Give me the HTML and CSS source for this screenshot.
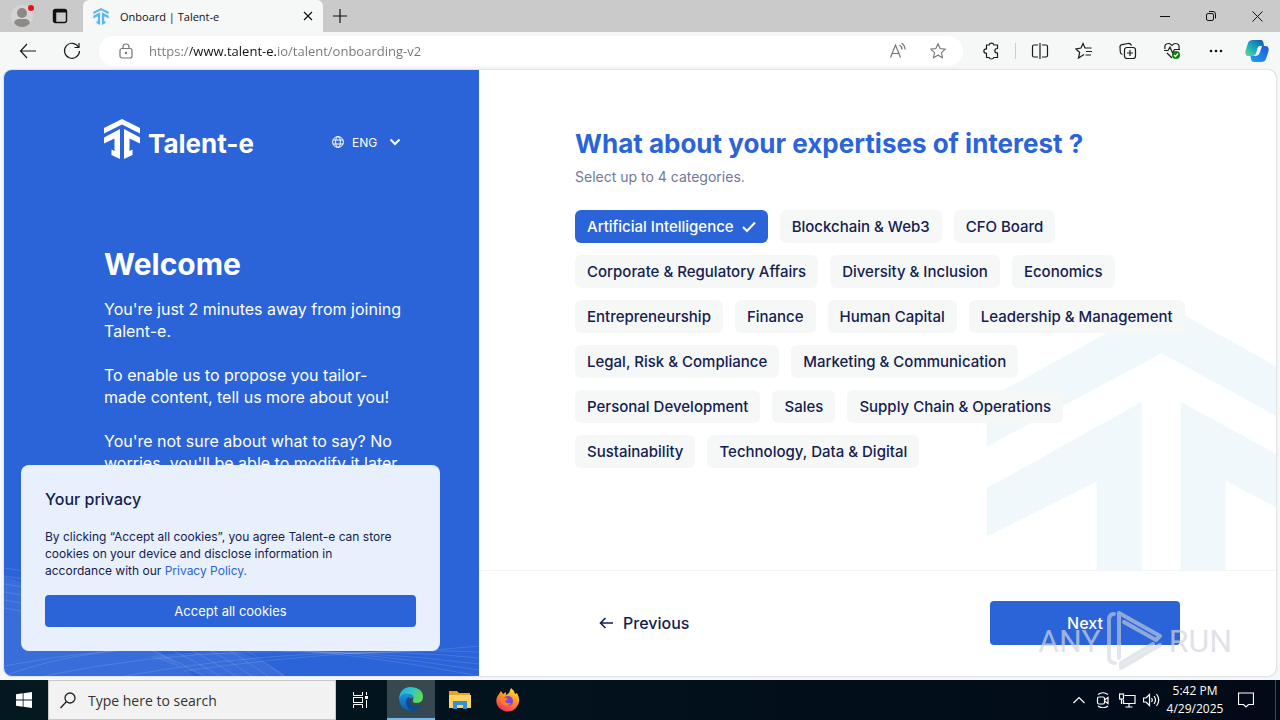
FILE: index.html
```html
<!DOCTYPE html>
<html lang="en">

<head>
    <meta charset="UTF-8">
    <meta name="viewport" content="width=device-width, initial-scale=1.0">
    <title>Onboard | Talent-e</title>
    <link rel="stylesheet" href="styles.css">
</head>

<body>
    <!-- shared shapes -->
    <svg class="defs" width="0" height="0" aria-hidden="true">
        <symbol id="mark" viewBox="0 0 36 40">
            <path d="M0 9L18 0L36 9V14.500L18 5.500L0 14.500Z" />
            <path d="M0 18.500L16 10V40L7.500 36V30.500L10.500 32V19.500L0 24.500Z" />
            <path d="M36 18.500L20 10V40L28.500 36V30.500L25.500 32V19.500L36 24.500Z" />
        </symbol>
        <symbol id="star" viewBox="0 0 20 20">
            <path d="M10 2L12.4 7.2L18 7.9L13.9 11.8L15 17.5L10 14.7L5 17.5L6.1 11.8L2 7.9L7.6 7.2Z" />
        </symbol>
    </svg>

    <header class="titlebar">
        <button class="title-btn" aria-label="Profile">
            <svg width="24" height="24" viewBox="0 0 24 24">
                <circle cx="12" cy="12" r="11" fill="#d6d4d3" />
                <circle cx="12" cy="9" r="5" fill="#8c8a89" />
                <path d="M4 19Q5 15 9 15H15Q19 15 20 19Q17 23 12 23Q7 23 4 19Z" fill="#8c8a89" />
                <circle cx="21" cy="4" r="3" fill="#e3121b" />
            </svg>
        </button>
        <button class="title-btn" aria-label="Tab actions">
            <svg width="16" height="16" viewBox="0 0 16 16" fill="none" stroke="#111" stroke-width="1.4">
                <rect x="1.5" y="1.5" width="13" height="13" rx="2" />
                <path d="M2 3H14" stroke-width="3" />
                <path d="M3 4V14" stroke-width="2.500" />
            </svg>
        </button>
        <div class="tab">
            <svg class="tab-logo" width="16" height="17"><use href="#mark" /></svg>
            <span class="tab-title">Onboard | Talent-e</span>
            <button class="tab-close" aria-label="Close tab">
                <svg width="10" height="10" viewBox="0 0 10 10" stroke="#111" stroke-width="1.2"><path d="M1 1L9 9M9 1L1 9" /></svg>
            </button>
        </div>
        <button class="new-tab" aria-label="New tab">
            <svg width="14" height="14" viewBox="0 0 14 14" stroke="#111" stroke-width="1.2"><path d="M7 0V14M0 7H14" /></svg>
        </button>
        <div class="window-controls">
            <button aria-label="Minimize"><svg width="10" height="10" viewBox="0 0 10 10" stroke="#111"><path d="M0 5.5H10" /></svg></button>
            <button aria-label="Restore">
                <svg width="12" height="12" viewBox="0 0 12 12" fill="none" stroke="#111"><rect x="1.5" y="3.5" width="7" height="7" rx="1.5" /><path d="M4 1.5H8Q10.500 1.500 10.500 4V8.500" /></svg>
            </button>
            <button aria-label="Close"><svg width="11" height="11" viewBox="0 0 11 11" stroke="#111"><path d="M.5 .5L10.500 10.500M10.500 .5L.5 10.500" /></svg></button>
        </div>
    </header>

    <nav class="toolbar">
        <button class="tool-btn" aria-label="Back">
            <svg width="18" height="18" viewBox="0 0 18 18" class="line"><path d="M17 9H1.500M8 2L1.500 9L8 16" /></svg>
        </button>
        <button class="tool-btn" aria-label="Refresh">
            <svg width="18" height="18" viewBox="0 0 18 18" class="line"><path d="M15.500 5A7.500 7.500 0 1 0 16.500 9M16 1V5.500H11.500" /></svg>
        </button>
        <div class="address">
            <svg width="14" height="16" viewBox="0 0 14 16" class="line muted"><rect x="1" y="5.500" width="12" height="9.500" rx="2" /><path d="M4 5.500V4Q4 1 7 1Q10 1 10 4V5.500" /><circle cx="7" cy="10" r=".6" /></svg>
            <input type="text" aria-label="Address" value="https://www.talent-e.io/talent/onboarding-v2">
            <button aria-label="Read aloud">
                <svg width="18" height="18" viewBox="0 0 18 18" class="line muted"><path d="M1.500 15.500L6.500 3L11.500 15.500M3.200 11.500H9.800M10.500 3Q13 4.500 13 7.500M12.500 1Q16 3.500 16 7.500" /></svg>
            </button>
            <button aria-label="Add to favorites"><svg width="18" height="18" class="line muted"><use href="#star" /></svg></button>
        </div>
        <button class="tool-btn" aria-label="Extensions">
            <svg width="18" height="18" viewBox="0 0 18 18" class="line"><path d="M5 3H7.200Q7.500 1.200 9.500 1.200Q11.500 1.200 11.800 3H15.500V6.500Q12.800 6.500 12.800 8.700Q12.800 11 15.500 11V15.500H11.800Q11.500 17 9.500 17Q7.500 17 7.200 15.500H4.500V11.300Q1.800 11.300 1.800 9Q1.800 6.800 4.500 6.800V3Z" /></svg>
        </button>
        <span class="divider"></span>
        <button class="tool-btn" aria-label="Split screen">
            <svg width="18" height="16" viewBox="0 0 18 16" class="line"><path d="M7 2H3Q1.500 2 1.500 3.500V12.500Q1.500 14 3 14H7M11 2H15Q16.500 2 16.500 3.500V12.500Q16.500 14 15 14H11M9 0V16" /></svg>
        </button>
        <button class="tool-btn" aria-label="Favorites">
            <svg width="18" height="18" viewBox="0 0 18 18" class="line"><path d="M9 12.500L3.500 16L4.700 10.500L1 7L6 6L8 1.500L10 6H16.500M11 9.500H17M10.500 13H16" /></svg>
        </button>
        <button class="tool-btn" aria-label="Collections">
            <svg width="18" height="18" viewBox="0 0 18 18" class="line"><rect x="5.500" y="5.500" width="11" height="11" rx="2.500" /><path d="M11 8V14M8 11H14M3.500 12.500Q1.500 12 1.300 10L1 5Q.9 3 3 2.600L9 1.500Q11.500 1.200 12.500 3.500" /></svg>
        </button>
        <button class="tool-btn" aria-label="Browser essentials">
            <svg width="18" height="18" viewBox="0 0 18 18" class="line"><path d="M2 7Q1 1.500 5.500 1.500Q7.500 1.500 9 3.500Q10.500 1.500 12.500 1.500Q17 1.500 16 7M1 8.500H5L7 5L9.500 11L11.500 7.500H17M4 11L9 16" /><circle cx="13" cy="13" r="4" fill="#107c10" stroke="none" /><path d="M11 13L12.500 14.500L15 11.500" stroke="#fff" /></svg>
        </button>
        <button class="tool-btn" aria-label="Settings and more">
            <svg width="16" height="4" viewBox="0 0 16 4" fill="#111"><circle cx="3" cy="2" r="1.300" /><circle cx="8" cy="2" r="1.300" /><circle cx="13" cy="2" r="1.300" /></svg>
        </button>
        <button class="copilot" aria-label="Copilot">
            <svg width="24" height="24" viewBox="0 0 24 24">
                <defs>
                    <linearGradient id="cpA" x1="0" y1="1" x2="1" y2="0"><stop offset="0" stop-color="#5fe08c" /><stop offset=".4" stop-color="#22b0b8" /><stop offset="1" stop-color="#0b55b8" /></linearGradient>
                    <linearGradient id="cpB" x1="0" y1="1" x2="1" y2="0"><stop offset="0" stop-color="#1ca6f2" /><stop offset="1" stop-color="#1e55dc" /></linearGradient>
                </defs>
                <path d="M8 1H16Q18 1 18.500 4L19 7H16Q13 7 12 11L10.500 17H4Q-.5 17 .5 12L3 4Q4 1 8 1Z" fill="url(#cpA)" />
                <path d="M16 23H9Q6.500 23 6 20L5.500 17H9Q11 17 12 14L14 7H20Q24.500 7 23.500 12L21 20Q20 23 16 23Z" fill="url(#cpB)" />
                <path d="M14 7H17L15 13Q14 17 10 17H8Q11 16 12 12Q12.500 8 14 7Z" fill="#f4f8ff" />
            </svg>
        </button>
    </nav>

    <div class="page">
        <aside class="side">
            <svg class="waves" viewBox="0 0 475 180" preserveAspectRatio="none" aria-hidden="true">
                <path class="band" d="M0 80Q110 120 190 180H0Z" />
                <path class="band" d="M225 154Q260 162 282 180L200 180L145 160Z" />
                <path d="M0 72Q160 90 280 180M0 80Q150 98 264 180M0 88Q140 106 248 180M0 96Q130 114 232 180M0 104Q120 122 216 180M0 112Q110 130 200 180" />
                <path d="M0 180Q160 120 475 180M0 170Q200 130 475 174M40 180Q240 138 475 168M120 180Q320 145 475 162M180 175Q360 150 475 156M220 150Q340 164 475 150" />
            </svg>
            <div class="side-top">
                <a class="brand" href="#">
                    <svg width="36" height="40" aria-hidden="true"><use href="#mark" /></svg>
                    <span>Talent-e</span>
                </a>
                <div class="lang">
                    <svg width="12" height="12" viewBox="0 0 12 12" fill="none" stroke="#fff"><circle cx="6" cy="6" r="5.400" /><ellipse cx="6" cy="6" rx="2.400" ry="5.400" /><path d="M.8 4H11.200M.8 8H11.200" /></svg>
                    <select aria-label="Language">
                        <option>ENG</option>
                        <option>FRA</option>
                    </select>
                    <svg class="lang-arrow" width="12" height="8" viewBox="0 0 12 8" fill="none" stroke="#fff" stroke-width="2"><path d="M1.500 1.500L6 6L10.500 1.500" /></svg>
                </div>
            </div>
            <h1>Welcome</h1>
            <p>You're just 2 minutes away from joining Talent-e.</p>
            <p>To enable us to propose you tailor-made content, tell us more about you!</p>
            <p>You're not sure about what to say? No worries, you'll be able to modify it later.</p>
        </aside>

        <main class="main">
            <section class="question">
                <svg class="backdrop" viewBox="78 0 870 840" aria-hidden="true">
                    <path d="M80 328L605 38L948 228V378L605 190L80 470Z" />
                    <path d="M80 595L545 335V840H410V575L80 740Z" />
                    <path d="M662 335L948 491V652L797 572V840H662Z" />
                </svg>
                <h2>What about your expertises of interest ?</h2>
                <p class="hint">Select up to 4 categories.</p>
                <div class="chips">
                    <div class="chip-row">
                        <button class="chip selected" aria-pressed="true">Artificial Intelligence
                            <svg width="14" height="12" viewBox="0 0 14 12" fill="none" stroke="#fff" stroke-width="2"><path d="M1 6L5 10L13 1.500" /></svg>
                        </button>
                        <button class="chip">Blockchain &amp; Web3</button>
                        <button class="chip">CFO Board</button>
                    </div>
                    <div class="chip-row">
                        <button class="chip">Corporate &amp; Regulatory Affairs</button>
                        <button class="chip">Diversity &amp; Inclusion</button>
                        <button class="chip">Economics</button>
                    </div>
                    <div class="chip-row">
                        <button class="chip">Entrepreneurship</button>
                        <button class="chip">Finance</button>
                        <button class="chip">Human Capital</button>
                        <button class="chip">Leadership &amp; Management</button>
                    </div>
                    <div class="chip-row">
                        <button class="chip">Legal, Risk &amp; Compliance</button>
                        <button class="chip">Marketing &amp; Communication</button>
                    </div>
                    <div class="chip-row">
                        <button class="chip">Personal Development</button>
                        <button class="chip">Sales</button>
                        <button class="chip">Supply Chain &amp; Operations</button>
                    </div>
                    <div class="chip-row">
                        <button class="chip">Sustainability</button>
                        <button class="chip">Technology, Data &amp; Digital</button>
                    </div>
                </div>
            </section>
            <footer class="actions">
                <button class="previous">
                    <svg width="14" height="12" viewBox="0 0 14 12" fill="none" stroke="#14204f" stroke-width="1.600"><path d="M14 6H1.500M6.500 1L1.500 6L6.500 11" /></svg>
                    Previous
                </button>
                <button class="next">Next</button>
            </footer>
        </main>

        <div class="cookies" role="dialog" aria-label="Your privacy">
            <h3>Your privacy</h3>
            <p>By clicking “Accept all cookies”, you agree Talent-e can store cookies on your device and disclose information in accordance with our <a href="#">Privacy Policy.</a></p>
            <button>Accept all cookies</button>
        </div>

        <div class="watermark">
            <span>ANY</span>
            <svg width="56" height="62" viewBox="0 0 56 62" fill="none" stroke-width="4" stroke-linejoin="round" stroke-linecap="round"><path d="M7 4Q2 4 2 10V47Q2 53 8 53M12 3V48M12 3L53 26L49 30L17 12M53 35L14 58V53L46 34M12 3V24" /></svg>
            <span>RUN</span>
        </div>
    </div>

    <footer class="taskbar">
        <button class="task" aria-label="Start">
            <svg width="16" height="16" viewBox="0 0 16 16" fill="#fff"><path d="M0 2.200L6.700 1.300V7.600H0ZM7.500 1.200L16 0V7.600H7.500ZM0 8.400H6.700V14.700L0 13.800ZM7.500 8.400H16V16L7.500 14.800Z" /></svg>
        </button>
        <label class="search">
            <svg width="16" height="17" viewBox="0 0 16 17" fill="none" stroke="#222" stroke-width="1.300"><circle cx="10" cy="6" r="5" /><path d="M6.500 9.500L.5 16" /></svg>
            <input type="text" aria-label="Search" placeholder="Type here to search">
        </label>
        <button class="task" aria-label="Task view">
            <svg width="17" height="16" viewBox="0 0 17 16" fill="none" stroke="#fff"><path d="M1.500 0V3.500H10.500V0M1.500 16V12.500H10.500V16M14.500 0V3M14.500 8V16" /><rect x="1.500" y="5.500" width="9" height="5" /><path d="M13 5.500H16" stroke-width="3" /></svg>
        </button>
        <button class="task active" aria-label="Microsoft Edge">
            <svg width="24" height="24" viewBox="0 0 24 24">
                <defs>
                    <linearGradient id="edA" x1="0" y1="0" x2="1" y2=".4"><stop offset="0" stop-color="#2aa6e4" /><stop offset=".5" stop-color="#2dc3cf" /><stop offset="1" stop-color="#5ddb58" /></linearGradient>
                    <linearGradient id="edB" x1="0" y1="0" x2="0" y2="1"><stop offset="0" stop-color="#1b94e0" /><stop offset="1" stop-color="#0d58a8" /></linearGradient>
                </defs>
                <path d="M0 12Q1 0 12 0Q24 1 24 10Q24 16 17 16Q13 16 14 13Q16 8 10 7Q3 7 0 12Z" fill="url(#edA)" />
                <path d="M0 12Q3 5 10 7Q15 8 14 12Q12 9 10 12Q8 20 16 20Q20 20 22 18Q19 24 12 24Q1 23 0 12Z" fill="url(#edB)" />
                <path d="M10 10Q5 12 8 19Q10 23 14 24Q20 22 22 18Q12 22 10 14Z" fill="#0c4a91" />
            </svg>
        </button>
        <button class="task" aria-label="File Explorer">
            <svg width="22" height="18" viewBox="0 0 22 18"><path d="M0 0H8L10 2H21V17H0Z" fill="#e8a321" /><path d="M0 4H22V17H0Z" fill="#fcd462" /><path d="M4 18V10H18V18H14V14H8V18Z" fill="#3a8fd0" /></svg>
        </button>
        <button class="task" aria-label="Firefox">
            <svg width="24" height="24" viewBox="0 0 24 24">
                <defs><linearGradient id="ff" x1=".8" y1="0" x2=".3" y2="1"><stop offset="0" stop-color="#ffe640" /><stop offset=".5" stop-color="#ff8a1e" /><stop offset="1" stop-color="#f0306a" /></linearGradient></defs>
                <path d="M3 6L5 3L7 6L10 4L10 7L13 5L15 0Q18 2 19 6L21 5Q26 14 20 20Q15 25 8 23Q-2 18 1 9Z" fill="url(#ff)" />
                <circle cx="12" cy="13" r="5" fill="#7a45d8" />
                <path d="M5 11Q9 8 12 11L9 13Q10 16 15 15Q12 19 8 17Q5 15 5 11Z" fill="#ff8125" />
            </svg>
        </button>
        <div class="tray">
            <button aria-label="Show hidden icons"><svg width="12" height="8" viewBox="0 0 12 8" class="tray-line"><path d="M.5 7L6 1.500L11.500 7" /></svg></button>
            <button aria-label="Meet now"><svg width="14" height="16" viewBox="0 0 14 16" class="tray-line"><rect x="1.500" y="5" width="7" height="7" rx="1.500" /><path d="M8.500 8L12 5.500V11.500L8.500 9M2 2.500Q7 -1 12 2.500M2 14Q7 17.500 12 14" /></svg></button>
            <button aria-label="Network"><svg width="17" height="15" viewBox="0 0 17 15" class="tray-line"><path d="M5.500 2.500H16V10.500H4.500V7M10 10.500V14M6.500 14H13.500M2.500 6V11" /><rect x=".5" y="1" width="4" height="5" /></svg></button>
            <button aria-label="Volume"><svg width="17" height="14" viewBox="0 0 17 14" class="tray-line"><path d="M.5 5H3L6.500 1.500V12.500L3 9H.5ZM8.500 5Q10 7 8.500 9M11 3Q14 7 11 11M13.500 1Q18 7 13.500 13" /></svg></button>
            <div class="clock"><time>5:42 PM</time><time>4/29/2025</time></div>
            <button class="notice" aria-label="Notifications"><svg width="16" height="16" viewBox="0 0 16 16" class="tray-line"><path d="M.5 1H15.500V12.500H10.500L8 15L5.500 12.500H.5Z" /></svg></button>
        </div>
    </footer>
</body>

</html>
```
FILE: styles.css
```css
* {
    box-sizing: border-box;
}

body {
    margin: 0;
    min-height: 100vh;
    display: flex;
    flex-direction: column;
    font-family: Inter, "Open Sans", sans-serif;
    background-color: #f6f7f7;
    color: #14204f;
}

button {
    padding: 0;
    border: none;
    background: none;
    color: inherit;
    font-family: inherit;
    cursor: pointer;
}

button,
.tab,
.address,
.search {
    display: flex;
    align-items: center;
}

h1, h2, h3, p {
    margin: 0;
}

.defs {
    position: absolute;
}

.line {
    fill: none;
    stroke: #1b1b1b;
    stroke-width: 1.2;
}

.muted {
    stroke: #757575;
}

/* browser chrome */
.titlebar {
    display: flex;
    height: 32px;
    padding-left: 3px;
    background-color: #cacaca;
    font-family: "Open Sans", sans-serif;
}

.title-btn,
.new-tab {
    width: 38px;
    justify-content: center;
}

.new-tab {
    width: 34px;
}

.tab {
    width: 240px;
    margin-left: 4px;
    padding: 0 10px;
    gap: 11px;
    background-color: #f6f7f7;
    border-radius: 6px 6px 0 0;
    font-size: 11px;
    color: #111;
}

.tab-logo {
    fill: #5bb8ec;
}

.tab-title {
    flex: 1;
}

.window-controls {
    display: flex;
    margin-left: auto;
}

.window-controls button {
    width: 46px;
    justify-content: center;
}

.toolbar {
    display: flex;
    align-items: center;
    height: 38px;
    padding: 0 4px 0 6px;
}

.tool-btn {
    width: 44px;
    height: 32px;
    justify-content: center;
}

.address {
    flex: 1;
    height: 30px;
    margin: 0 6px 0 5px;
    padding: 0 16px 0 20px;
    gap: 16px;
    background-color: #fff;
    border-radius: 15px;
}

.address input {
    flex: 1;
    border: none;
    padding: 0;
    outline: none;
    font-family: "Open Sans", sans-serif;
    font-size: 13px;
    /* host part is darker than the rest */
    color: transparent;
    background: linear-gradient(to right, #757575 41px, #111 41px, #111 129px, #757575 129px);
    -webkit-background-clip: text;
    background-clip: text;
}

.address button + button {
    margin-left: 6px;
}

.divider {
    width: 1px;
    height: 16px;
    margin: 0 2px;
    background-color: #ccc;
}

.copilot {
    width: 38px;
    justify-content: center;
}

/* page */
.page {
    position: relative;
    flex: 1;
    display: flex;
    margin: 0 4px 4px;
    background-color: #fff;
    border-radius: 8px;
    overflow: hidden;
    box-shadow: 0 0 2px rgba(0, 0, 0, 0.3);
}

.side {
    position: relative;
    width: 475px;
    padding: 48px 78px 0 100px;
    background-color: #2b64d8;
    color: #fff;
}

.waves {
    position: absolute;
    left: 0;
    bottom: 0;
    width: 100%;
    height: 180px;
    fill: none;
    stroke: #fff;
    stroke-opacity: 0.12;
}

.waves .band {
    fill: #fff;
    fill-opacity: 0.07;
    stroke: none;
}

.side-top {
    display: flex;
    align-items: center;
    justify-content: space-between;
    height: 42px;
    margin-bottom: 80px;
}

.brand {
    display: flex;
    align-items: center;
    gap: 8px;
    color: #fff;
    font-size: 26px;
    font-weight: 700;
    text-decoration: none;
}

.brand span {
    padding-top: 8px;
}

.brand svg {
    fill: #fff;
}

.lang {
    display: flex;
    align-items: center;
    gap: 8px;
    padding-top: 6px;
}

.lang select {
    appearance: none;
    width: 29px;
    padding: 0;
    border: none;
    background: none;
    color: #fff;
    font-family: inherit;
    font-size: 12px;
}

.side h1 {
    margin-bottom: 10px;
    font-size: 30px;
    line-height: 48px;
}

.side p {
    margin: 0 -8px 22px 0;
    font-size: 16px;
    line-height: 22px;
}

.main {
    flex: 1;
    display: flex;
    flex-direction: column;
}

.question {
    position: relative;
    flex: 1;
    padding: 56px 88px 0 96px;
}

.backdrop {
    position: absolute;
    right: 0;
    bottom: 0;
    width: 290px;
    height: 280px;
    fill: #f1f8fc;
}

.question h2,
.hint,
.chips {
    position: relative;
}

.question h2 {
    font-size: 26px;
    line-height: 36px;
    color: #2b64d8;
}

.hint {
    margin: 4px 0 22px;
    font-size: 14px;
    line-height: 22px;
    color: #6f7898;
}

.chips {
    display: flex;
    flex-direction: column;
    gap: 12px;
}

.chip-row {
    display: flex;
    gap: 12px;
}

.chip {
    height: 33px;
    padding: 0 12px;
    gap: 8px;
    border-radius: 6px;
    background-color: #f6f8f8;
    font-size: 15px;
    font-weight: 500;
    white-space: nowrap;
}

.chip.selected {
    background-color: #2b64d8;
    color: #fff;
}

.actions {
    display: flex;
    align-items: center;
    justify-content: space-between;
    height: 106px;
    padding: 0 96px 2px;
    border-top: 1px solid #f3f4f5;
}

.previous,
.next {
    height: 44px;
    padding: 0 24px;
    gap: 10px;
    border-radius: 4px;
    font-size: 16px;
    font-weight: 500;
}

.next {
    width: 190px;
    justify-content: center;
    background-color: #2b64d8;
    color: #fff;
}

.cookies {
    position: absolute;
    left: 17px;
    bottom: 25px;
    width: 419px;
    padding: 23px 24px 24px;
    background-color: #e9f0fd;
    border-radius: 8px;
}

.cookies h3 {
    margin-bottom: 18px;
    font-size: 16px;
    font-weight: 500;
    line-height: 22px;
}

.cookies p {
    margin-bottom: 16px;
    padding-right: 16px;
    font-size: 12px;
    line-height: 17px;
}

.cookies a {
    color: #2b64d8;
    text-decoration: none;
}

.cookies button {
    width: 100%;
    height: 32px;
    justify-content: center;
    border-radius: 4px;
    background-color: #2b64d8;
    color: #fff;
    font-size: 13px;
}

.watermark {
    position: absolute;
    right: 44px;
    bottom: 4px;
    display: flex;
    align-items: center;
    gap: 6px;
    font-family: "Liberation Sans Narrow", Roboto, sans-serif;
    font-size: 32px;
    color: rgba(210, 214, 224, 0.7);
    pointer-events: none;
}

.watermark svg {
    stroke: rgba(210, 214, 224, 0.6);
}

/* taskbar */
.taskbar {
    display: flex;
    height: 40px;
    background: linear-gradient(to right, #031820, #020a18);
    color: #fff;
    font-family: "Open Sans", sans-serif;
}

.task {
    width: 48px;
    justify-content: center;
}

.task.active {
    margin: 0 1px 0 3px;
    background-color: #364850;
    border-bottom: 2px solid #76b9ed;
}

.search {
    width: 288px;
    padding: 0 11px;
    gap: 12px;
    background-color: #f2f2f2;
    border: 1px solid #c8c8c8;
}

.search input {
    flex: 1;
    padding: 0;
    border: none;
    outline: none;
    background: none;
    font-family: inherit;
    font-size: 14px;
}

.search input::placeholder {
    color: #333;
}

.tray {
    display: flex;
    align-items: center;
    margin-left: auto;
}

.tray button {
    width: 24px;
    height: 40px;
    justify-content: center;
}

.tray-line {
    fill: none;
    stroke: #fff;
    stroke-width: 1.2;
}

.clock {
    display: flex;
    flex-direction: column;
    width: 64px;
    text-align: center;
    font-size: 12px;
    line-height: 18px;
}

.tray .notice {
    width: 49px;
    margin-right: 4px;
    padding-right: 10px;
    border-right: 1px solid #3d4a52;
}
```
